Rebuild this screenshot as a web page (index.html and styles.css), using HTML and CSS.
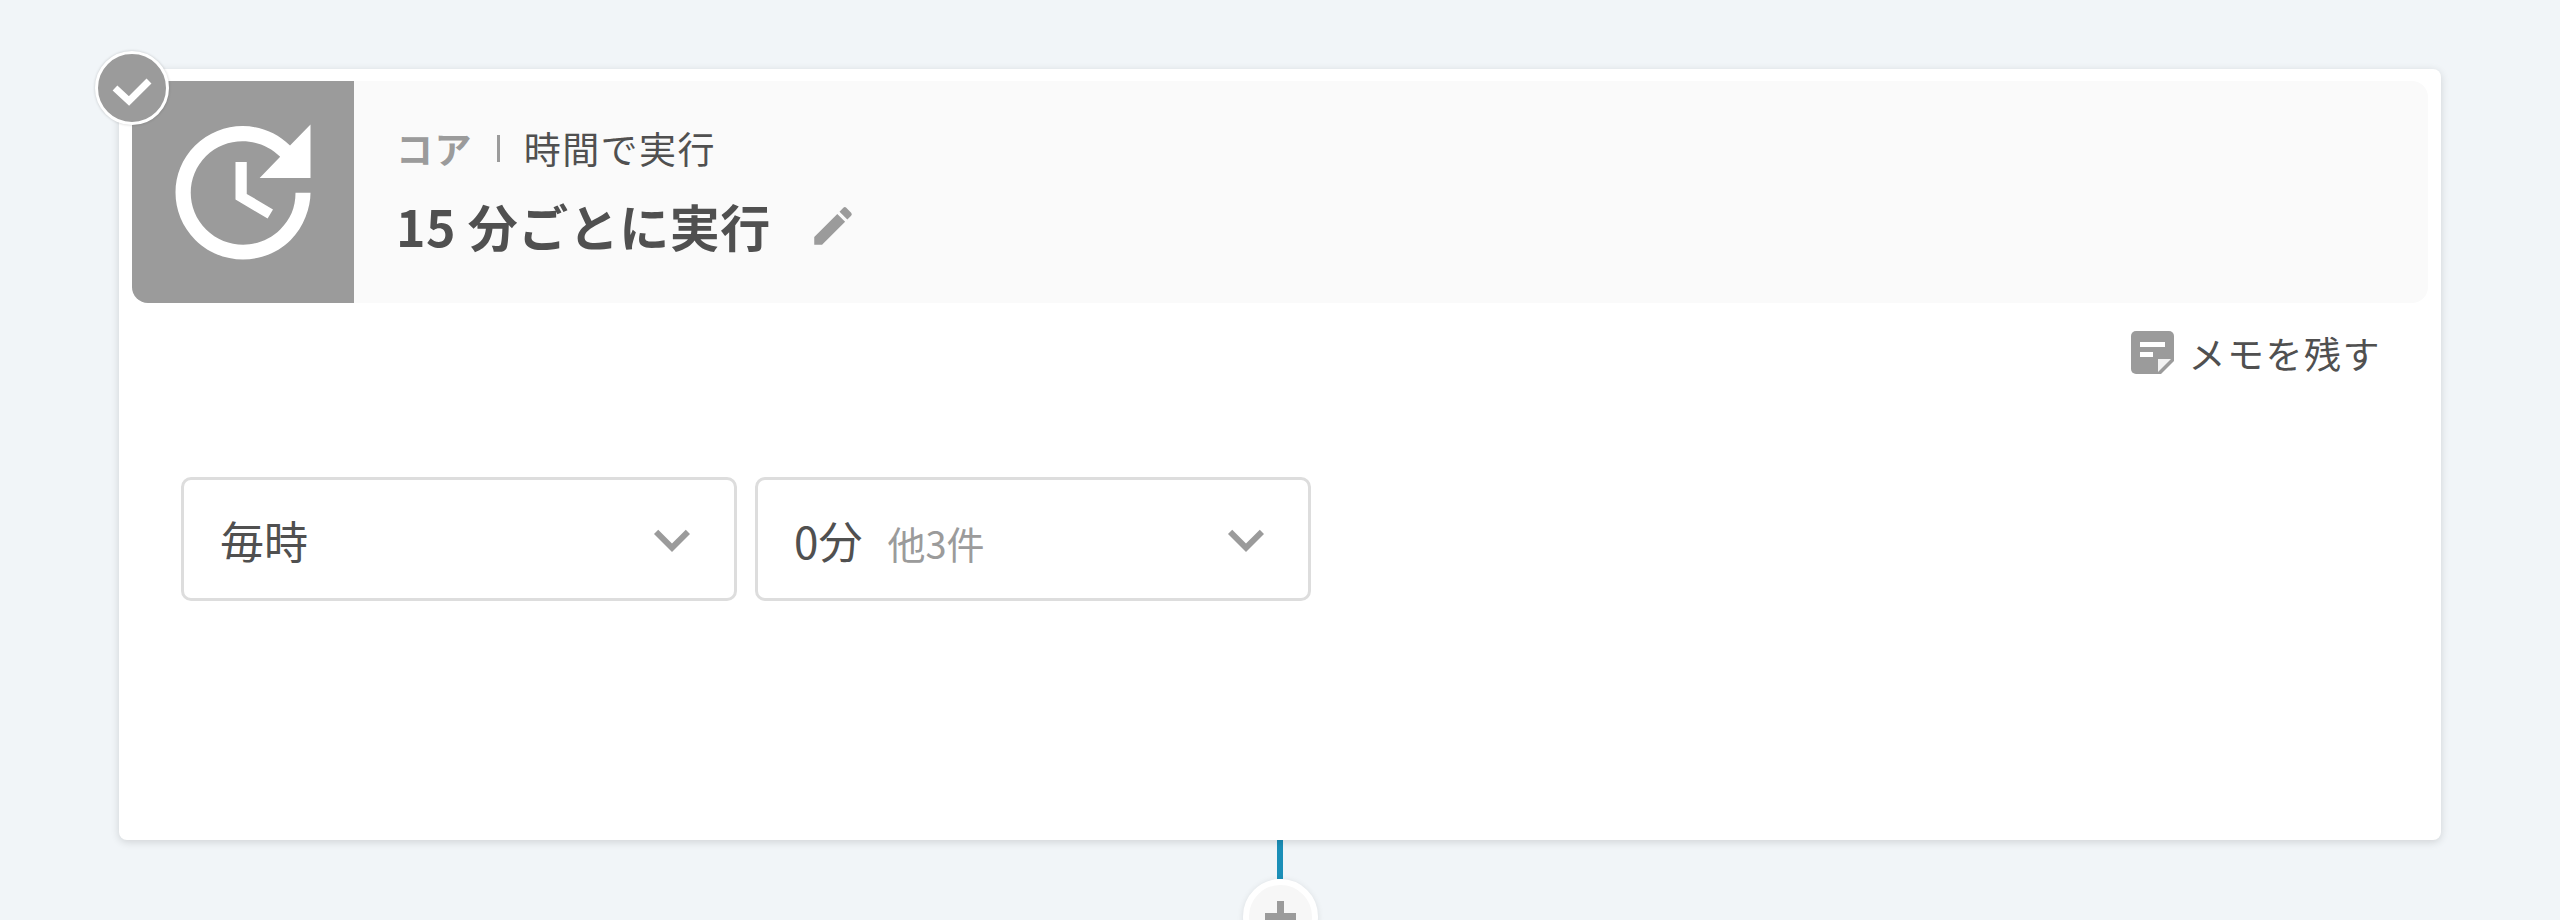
FILE: index.html
```html
<!DOCTYPE html>
<html lang="ja">
<head>
    <meta charset="UTF-8">
    <title>15 分ごとに実行</title>
    <link rel="stylesheet" href="styles.css">
</head>
<body>

<div class="flow">
    <div class="card">
        <div class="badge">
            <svg width="40" height="40" viewBox="0 0 40 40"><path d="M3 20 L17 33 L37 13" fill="none" stroke="#fff" stroke-width="7"/></svg>
        </div>

        <div class="step-head">
            <div class="step-icon">
                <svg width="180" height="180" viewBox="0 0 24 24"><path fill="#fff" d="M21 10.12h-6.78l2.74-2.82c-2.73-2.7-7.15-2.8-9.88-.1-2.73 2.71-2.73 7.08 0 9.79s7.15 2.71 9.88 0C18.32 15.65 19 14.08 19 12.1h2c0 1.98-.88 4.55-2.64 6.29-3.51 3.48-9.21 3.48-12.72 0-3.5-3.47-3.53-9.11-.02-12.58s9.14-3.47 12.65 0L21 3v7.12zM12.5 8v4.25l3.5 2.08-.72 1.21L11 13V8h1.5z"/></svg>
            </div>
            <div class="step-info">
                <div class="step-label">
                    <span class="app-name">コア</span>
                    <span class="divider"></span>
                    <span>時間で実行</span>
                </div>
                <div class="step-title">
                    <span>15 分ごとに実行</span>
                    <svg class="edit-icon" width="50" height="50" viewBox="0 0 24 24"><path fill="#9b9b9b" d="M3 17.25V21h3.75L17.81 9.94l-3.75-3.75L3 17.25zM20.71 7.04a1 1 0 0 0 0-1.41l-2.34-2.34a1 1 0 0 0-1.41 0l-1.83 1.83 3.75 3.75 1.83-1.83z"/></svg>
                </div>
            </div>
        </div>

        <div class="memo-row">
            <svg width="43" height="43" viewBox="0 0 43 43"><path fill="#9b9b9b" d="M5 0h33a5 5 0 0 1 5 5v25L30 43H5a5 5 0 0 1-5-5V5a5 5 0 0 1 5-5z"/><path fill="#fff" d="M9 11h25v5H9zM9 21h13v5H9z"/><path fill="#f2f2f2" d="M27 41V28h13z"/></svg>
            <span>メモを残す</span>
        </div>

        <div class="selects">
            <div class="select">
                <div class="select-value">毎時</div>
                <svg class="chevron" width="72" height="72" viewBox="0 0 24 24"><path fill="#9b9b9b" d="M16.59 8.59L12 13.17 7.41 8.59 6 10l6 6 6-6z"/></svg>
            </div>
            <div class="select">
                <div class="select-value">0分<span class="select-more">他3件</span></div>
                <svg class="chevron" width="72" height="72" viewBox="0 0 24 24"><path fill="#9b9b9b" d="M16.59 8.59L12 13.17 7.41 8.59 6 10l6 6 6-6z"/></svg>
            </div>
        </div>
    </div>

    <div class="line"></div>
    <div class="add-btn">
        <svg width="31" height="31" viewBox="0 0 31 31"><path fill="#9b9b9b" d="M12 0h7v12h12v7H19v12h-7V19H0v-7h12z"/></svg>
    </div>
</div>

</body>
</html>
```

FILE: styles.css
```css
html, body {
    margin: 0;
    height: 100%;
    overflow: hidden;
}
body {
    background-color: #f1f5f8;
    font-family: "Noto Sans CJK JP", "Noto Sans", sans-serif;
    color: #505050;
}
.flow {
    display: flex;
    flex-direction: column;
    align-items: center;
    width: 2322px;
    margin-left: 119px;
    padding-top: 69px;
}
.card {
    position: relative;
    box-sizing: border-box;
    width: 100%;
    height: 771px;
    padding: 12px 13px;
    background-color: #fff;
    border-radius: 8px;
    box-shadow: 0 2px 8px rgba(0, 0, 0, 0.14);
}
.badge {
    position: absolute;
    left: -24px;
    top: -18px;
    box-sizing: border-box;
    width: 74px;
    height: 74px;
    display: flex;
    align-items: center;
    justify-content: center;
    background-color: #9b9b9b;
    border: 3px solid #fff;
    border-radius: 50%;
    box-shadow: 0 0 3px rgba(0, 0, 0, 0.2);
}
.step-head {
    display: flex;
    height: 222px;
    background-color: #fafafa;
    border-radius: 0 16px 16px 16px;
}
.step-icon {
    width: 222px;
    flex-shrink: 0;
    display: flex;
    align-items: center;
    justify-content: center;
    background-color: #9b9b9b;
    border-radius: 0 0 0 16px;
}
.step-info {
    padding: 40px 0 0 42px;
}
.step-label {
    display: flex;
    align-items: center;
    gap: 24px;
    height: 54px;
    font-size: 37px;
    letter-spacing: 1.4px;
}
.app-name {
    font-weight: 700;
    color: #9b9b9b;
}
.divider {
    width: 3px;
    height: 27px;
    background-color: #9b9b9b;
}
.step-title {
    display: flex;
    align-items: center;
    gap: 37px;
    margin-top: 15px;
    height: 70px;
    font-size: 50px;
    font-weight: 700;
    letter-spacing: 0.5px;
}
.edit-icon {
    margin-top: 2px;
}
.memo-row {
    display: flex;
    align-items: center;
    justify-content: flex-end;
    gap: 15px;
    height: 43px;
    margin-top: 28px;
    padding-right: 47px;
    font-size: 37px;
    letter-spacing: 1.5px;
}
.selects {
    display: flex;
    gap: 18px;
    margin-top: 103px;
    padding-left: 49px;
}
.select {
    box-sizing: border-box;
    width: 556px;
    height: 124px;
    display: flex;
    align-items: center;
    justify-content: space-between;
    padding: 0 26px 0 36px;
    border: 3px solid #ddd;
    border-radius: 10px;
}
.select-value {
    font-size: 44px;
    padding-top: 2px;
}
.select-more {
    margin-left: 25px;
    font-size: 38px;
    color: #9b9b9b;
}
.chevron {
    margin-top: 2px;
}
.line {
    width: 6px;
    height: 39px;
    background-color: #1b8fb8;
}
.add-btn {
    box-sizing: border-box;
    width: 75px;
    height: 75px;
    flex-shrink: 0;
    display: flex;
    align-items: center;
    justify-content: center;
    background-color: #f7f7f7;
    border: 6px solid #fff;
    border-radius: 50%;
    box-shadow: 0 1px 6px rgba(0, 0, 0, 0.1);
}
```
